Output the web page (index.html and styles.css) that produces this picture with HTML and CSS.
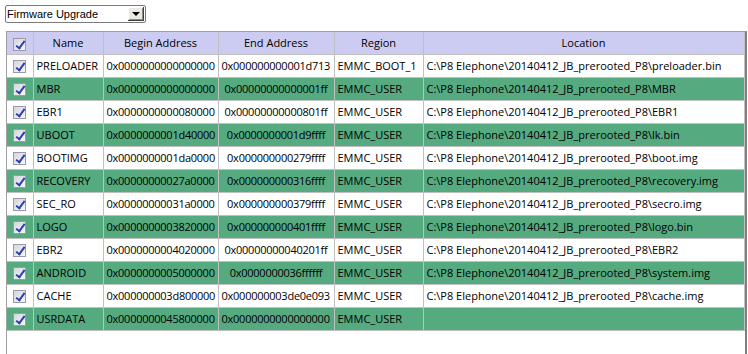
FILE: index.html
```html
<!DOCTYPE html>
<html lang="en">
<head>
<meta charset="UTF-8" />
<title>Firmware Upgrade</title>
<link rel="stylesheet" href="styles.css">
</head>
<body>
  <div class="toolbar">
    <div class="combo">
      <span class="combo-text">Firmware Upgrade</span>
      <span class="combo-btn"><span class="arrow"></span></span>
    </div>
  </div>
  <div class="grid-frame">
    <table class="grid">
      <colgroup>
        <col class="c-check"><col class="c-name"><col class="c-begin"><col class="c-end"><col class="c-region"><col class="c-loc">
      </colgroup>
      <thead>
        <tr>
          <th class="chk"><span class="box"></span></th>
          <th>Name</th>
          <th>Begin Address</th>
          <th>End Address</th>
          <th>Region</th>
          <th>Location</th>
        </tr>
      </thead>
      <tbody>
        <tr><td class="chk"><span class="box"></span></td><td>PRELOADER</td><td class="addr">0x0000000000000000</td><td class="addr">0x000000000001d713</td><td>EMMC_BOOT_1</td><td>C:\P8 Elephone\20140412_JB_prerooted_P8\preloader.bin</td></tr>
        <tr class="alt"><td class="chk"><span class="box"></span></td><td>MBR</td><td class="addr">0x0000000000000000</td><td class="addr mid">0x00000000000001ff</td><td>EMMC_USER</td><td>C:\P8 Elephone\20140412_JB_prerooted_P8\MBR</td></tr>
        <tr><td class="chk"><span class="box"></span></td><td>EBR1</td><td class="addr">0x0000000000080000</td><td class="addr mid">0x00000000000801ff</td><td>EMMC_USER</td><td>C:\P8 Elephone\20140412_JB_prerooted_P8\EBR1</td></tr>
        <tr class="alt"><td class="chk"><span class="box"></span></td><td>UBOOT</td><td class="addr">0x0000000001d40000</td><td class="addr mid">0x0000000001d9ffff</td><td>EMMC_USER</td><td>C:\P8 Elephone\20140412_JB_prerooted_P8\lk.bin</td></tr>
        <tr><td class="chk"><span class="box"></span></td><td>BOOTIMG</td><td class="addr">0x0000000001da0000</td><td class="addr mid">0x000000000279ffff</td><td>EMMC_USER</td><td>C:\P8 Elephone\20140412_JB_prerooted_P8\boot.img</td></tr>
        <tr class="alt"><td class="chk"><span class="box"></span></td><td>RECOVERY</td><td class="addr">0x00000000027a0000</td><td class="addr mid">0x000000000316ffff</td><td>EMMC_USER</td><td>C:\P8 Elephone\20140412_JB_prerooted_P8\recovery.img</td></tr>
        <tr><td class="chk"><span class="box"></span></td><td>SEC_RO</td><td class="addr">0x00000000031a0000</td><td class="addr mid">0x000000000379ffff</td><td>EMMC_USER</td><td>C:\P8 Elephone\20140412_JB_prerooted_P8\secro.img</td></tr>
        <tr class="alt"><td class="chk"><span class="box"></span></td><td>LOGO</td><td class="addr">0x0000000003820000</td><td class="addr mid">0x000000000401ffff</td><td>EMMC_USER</td><td>C:\P8 Elephone\20140412_JB_prerooted_P8\logo.bin</td></tr>
        <tr><td class="chk"><span class="box"></span></td><td>EBR2</td><td class="addr">0x0000000004020000</td><td class="addr mid">0x00000000040201ff</td><td>EMMC_USER</td><td>C:\P8 Elephone\20140412_JB_prerooted_P8\EBR2</td></tr>
        <tr class="alt"><td class="chk"><span class="box"></span></td><td>ANDROID</td><td class="addr">0x0000000005000000</td><td class="addr mid">0x0000000036ffffff</td><td>EMMC_USER</td><td>C:\P8 Elephone\20140412_JB_prerooted_P8\system.img</td></tr>
        <tr><td class="chk"><span class="box"></span></td><td>CACHE</td><td class="addr">0x000000003d800000</td><td class="addr">0x000000003de0e093</td><td>EMMC_USER</td><td>C:\P8 Elephone\20140412_JB_prerooted_P8\cache.img</td></tr>
        <tr class="alt"><td class="chk"><span class="box"></span></td><td>USRDATA</td><td class="addr">0x0000000045800000</td><td class="addr">0x0000000000000000</td><td>EMMC_USER</td><td></td></tr>
      </tbody>
    </table>
  </div>
</body>
</html>
```

FILE: styles.css
```css
:root {
  --header-bg: #ccccf2;
  --alt-bg: #55aa80;
  --grid-line: #c0c0c0;
  --font-family: "Open Sans", "Noto Sans", sans-serif;
}
* {
  box-sizing: border-box;
}
html, body {
  margin: 0;
  padding: 0;
  background: #ffffff;
  color: #000000;
  font-family: var(--font-family);
  overflow: hidden;
}
.toolbar {
  padding: 5px 0 0 5px;
  height: 31px;
}
.combo {
  width: 141px;
  height: 18px;
  border: 1px solid #7a7a7a;
  border-radius: 2px;
  display: flex;
  align-items: stretch;
  background: #ffffff;
}
.combo-text {
  flex: 1;
  font-family: "Liberation Sans", Arial, sans-serif;
  font-size: 11px;
  line-height: 16px;
  padding-left: 1px;
}
.combo-btn {
  width: 16px;
  margin: 1px;
  background: #ece9e4;
  border-right: 1px solid #404040;
  border-bottom: 1px solid #404040;
  box-shadow: inset 1px 1px 0 #ffffff, inset -1px -1px 0 #8c8c8c;
  display: flex;
  align-items: center;
  justify-content: center;
}
.arrow {
  width: 0;
  height: 0;
  border-left: 4px solid transparent;
  border-right: 4px solid transparent;
  border-top: 4px solid #000000;
}
.grid-frame {
  margin-left: 6px;
  width: 741px;
  height: 330px;
  border-top: 1px solid #a0a0a0;
  border-left: 1px solid #a0a0a0;
  border-right: 2px solid #7f7f7f;
}
.grid {
  border-collapse: collapse;
  table-layout: fixed;
  width: 737px;
  font-size: 11px;
}
.c-check { width: 26px; }
.c-name { width: 70px; }
.c-begin { width: 115px; }
.c-end { width: 116px; }
.c-region { width: 89px; }
.c-loc { width: 321px; }
.grid th {
  background: var(--header-bg);
  font-weight: normal;
  height: 22px;
  border: 1px solid var(--grid-line);
  border-top: 0;
  text-align: center;
  padding: 0;
}
.grid th:first-child, .grid td:first-child {
  border-left: 0;
}
.grid td {
  height: 23px;
  border: 1px solid var(--grid-line);
  padding: 0 0 0 3px;
  white-space: nowrap;
  overflow: hidden;
}
.grid td.addr {
  letter-spacing: -0.25px;
}
.grid td.mid {
  text-align: center;
  padding: 0;
}
.grid tr.alt td {
  background: var(--alt-bg);
}
.grid .chk {
  padding: 0;
  text-align: center;
}
.box {
  display: inline-block;
  vertical-align: middle;
  width: 13px;
  height: 13px;
  border: 1px solid #9a9aa8;
  background: linear-gradient(135deg, #d4d4de, #f8f8fa);
  position: relative;
}
.box::after {
  content: "";
  position: absolute;
  left: 4px;
  top: 0px;
  width: 3px;
  height: 8px;
  border-right: 2px solid #2d40b4;
  border-bottom: 2px solid #2d40b4;
  transform: rotate(36deg);
}
```
